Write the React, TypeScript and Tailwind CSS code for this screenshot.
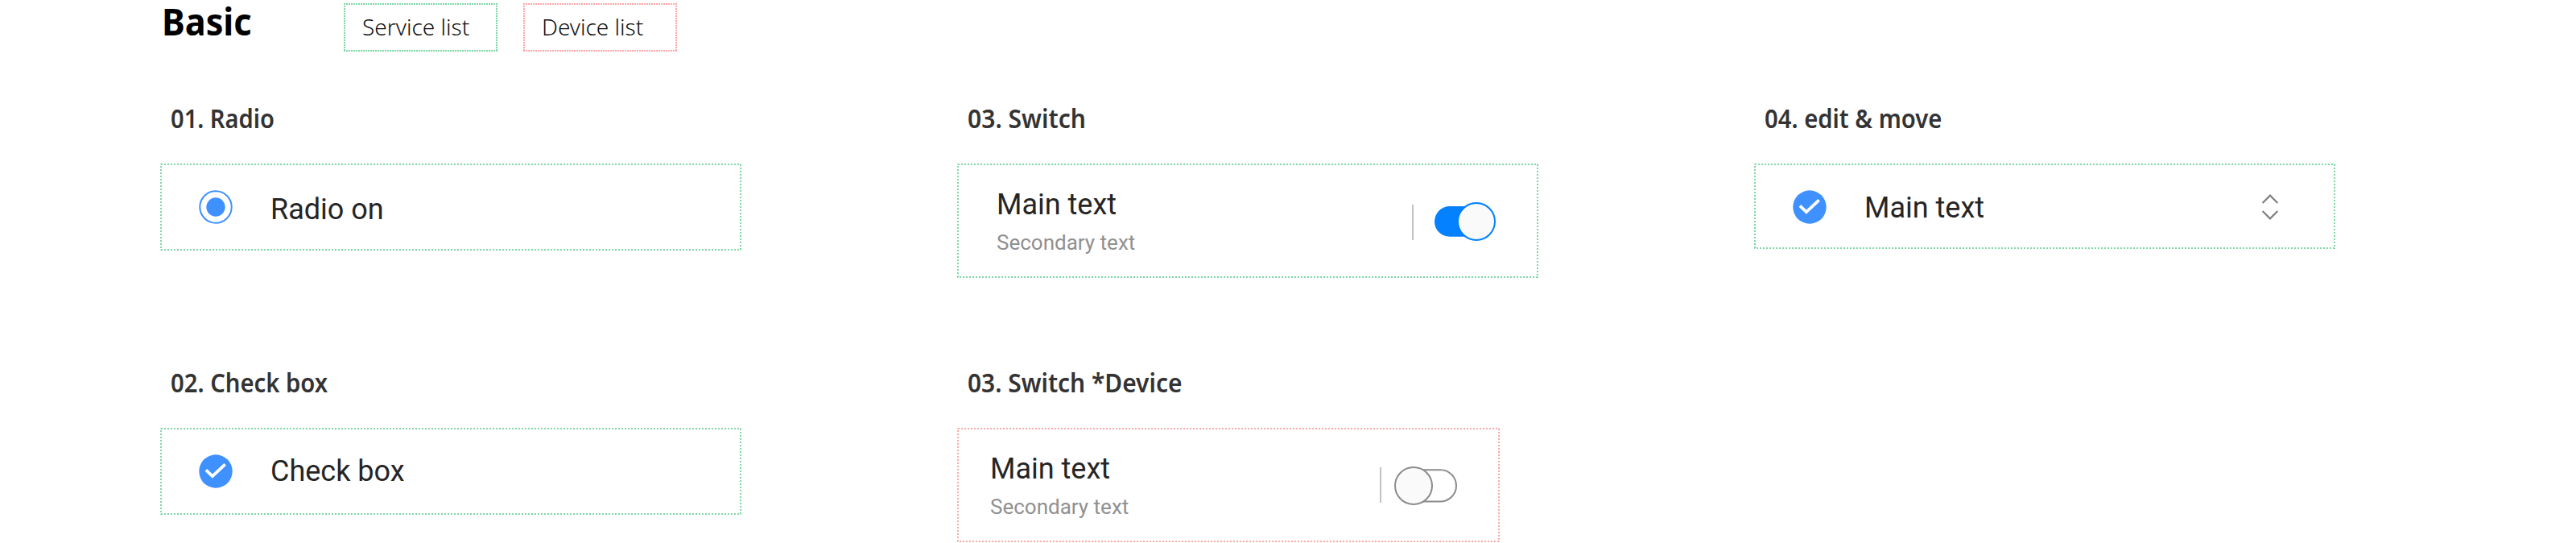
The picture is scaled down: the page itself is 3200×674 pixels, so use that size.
import React, { type ReactNode } from "react";

const green = "[--dot:#7fd6a7]";
const red = "[--dot:#faa9a9]";

// Dotted outline: four strips of 2px squares on a 4px pitch.
const dots =
  "bg-[linear-gradient(90deg,var(--dot)_50%,transparent_50%),linear-gradient(180deg,var(--dot)_50%,transparent_50%),linear-gradient(90deg,var(--dot)_50%,transparent_50%),linear-gradient(180deg,var(--dot)_50%,transparent_50%)] [background-repeat:repeat-x,repeat-y,repeat-x,repeat-y]";
const pitch4 = "[background-size:4px_2px,2px_4px,4px_2px,2px_4px]";
const even = "[background-position:1px_0,100%_1px,3px_100%,0_3px]";
const odd = "[background-position:1px_0,100%_1px,1px_100%,0_3px]";

// Tighter 3px pitch for the small legend boxes.
const fineDots =
  "bg-[linear-gradient(90deg,var(--dot)_60%,transparent_60%),linear-gradient(180deg,var(--dot)_60%,transparent_60%),linear-gradient(90deg,var(--dot)_60%,transparent_60%),linear-gradient(180deg,var(--dot)_60%,transparent_60%)] [background-repeat:repeat-x,repeat-y,repeat-x,repeat-y] [background-size:3px_2px,2px_3px,3px_2px,2px_3px] [background-position:0_0,100%_0,0_100%,0_0]";

function Check() {
  return (
    <svg className="h-[42px] w-[42px] shrink-0" viewBox="0 0 42 42">
      <circle cx="21" cy="21" r="20.7" fill="#3e91ff" />
      <path d="M8.9 19.4 L16.9 27.2 L32.6 12.3" fill="none" stroke="#fff" strokeWidth="3.8" />
    </svg>
  );
}

function Radio() {
  return (
    <svg className="h-[42px] w-[42px] shrink-0" viewBox="0 0 42 42">
      <circle cx="21" cy="21" r="19.7" fill="none" stroke="#3e91ff" strokeWidth="2" />
      <circle cx="21" cy="21" r="11.7" fill="#3e91ff" />
    </svg>
  );
}

function SwitchOn() {
  return (
    <svg className="mt-[2px] h-12 w-[78px] shrink-0" viewBox="0 0 78 48">
      <rect x="1" y="5" width="72" height="37.8" rx="18.9" fill="#0381fe" />
      <circle cx="53" cy="24" r="23" fill="#fafafa" stroke="#0381fe" strokeWidth="2" />
    </svg>
  );
}

function SwitchOff() {
  return (
    <svg className="mt-[2px] h-12 w-[78px] shrink-0" viewBox="0 0 78 48">
      <rect x="6" y="4.2" width="71" height="39.4" rx="19.7" fill="#fff" stroke="#8c8c8c" strokeWidth="2" />
      <circle cx="24" cy="24" r="23" fill="#fafafa" stroke="#8c8c8c" strokeWidth="2" />
    </svg>
  );
}

function Mover() {
  return (
    <svg
      className="h-8 w-[22px] shrink-0"
      viewBox="0 0 22 32"
      fill="none"
      stroke="#808080"
      strokeWidth="2.2"
    >
      <path d="M1.6 11 L11 1.6 L20.4 11 M1.6 21 L11 30.4 L20.4 21" />
    </svg>
  );
}

const main = "text-[36px] leading-[42px] text-[#252525] whitespace-nowrap";

function TwoLine() {
  return (
    <div className="flex flex-col">
      <div className={main}>Main text</div>
      <div className="mt-[11px] text-[26px] leading-[30px] whitespace-nowrap text-[#909090]">
        Secondary text
      </div>
    </div>
  );
}

function Section({ title, squeeze, children }: { title: string; squeeze: string; children: ReactNode }) {
  return (
    <section className="h-[328px]">
      <h2
        className={`mb-[35px] ml-[13px] w-fit origin-left font-['Noto_Sans',sans-serif] text-[32.5px] leading-[42px] font-semibold whitespace-nowrap text-[#333] ${squeeze}`}
      >
        {title}
      </h2>
      {children}
    </section>
  );
}

function Legend({ tone, children }: { tone: string; children: string }) {
  return (
    <div
      className={`h-[60px] w-[191px] pl-[23px] text-[28px] leading-[58px] font-[350] whitespace-nowrap text-[#111] ${fineDots} ${tone}`}
    >
      {children}
    </div>
  );
}

export default function App() {
  return (
    <div className="h-[674px] w-[3200px] overflow-hidden bg-white font-['Roboto',sans-serif]">
      <div className="flex h-[126px] pt-1 pl-[201px] font-['Noto_Sans',sans-serif]">
        <div className="w-[226px]">
          <h1 className="w-fit origin-left scale-x-[0.92] text-[47px] leading-[44px] font-bold text-black">
            Basic
          </h1>
        </div>
        <div className="flex gap-8">
          <Legend tone={green}>Service list</Legend>
          <Legend tone={red}>Device list</Legend>
        </div>
      </div>
      <div className="grid grid-cols-[990px_990px_722px] pl-[199px]">
        <Section title="01. Radio" squeeze="scale-x-[0.895]">
          <div className={`flex h-[108px] w-[722px] items-center pl-[48px] ${dots} ${pitch4} ${odd} ${green}`}>
            <Radio />
            <span className={`mt-[6px] ml-[47px] ${main}`}>Radio on</span>
          </div>
        </Section>
        <Section title="03. Switch" squeeze="scale-x-[0.925]">
          <div
            className={`flex h-[142px] w-[722px] items-center justify-between pr-[52px] pl-[49px] ${dots} ${pitch4} ${even} ${green}`}
          >
            <TwoLine />
            <div className="flex items-center gap-[25px]">
              <div className="mt-[4px] h-11 w-[2px] bg-[#c2c2c2]" />
              <SwitchOn />
            </div>
          </div>
        </Section>
        <Section title="04. edit & move" squeeze="scale-x-[0.9]">
          <div
            className={`flex h-[106px] w-[722px] items-center pt-[2px] pr-[70px] pl-[48px] ${dots} ${pitch4} ${even} ${green}`}
          >
            <Check />
            <span className={`mt-[2px] ml-[47px] flex-1 ${main}`}>Main text</span>
            <Mover />
          </div>
        </Section>
        <Section title="02. Check box" squeeze="scale-x-[0.9]">
          <div className={`flex h-[108px] w-[722px] items-center pl-[48px] ${dots} ${pitch4} ${odd} ${green}`}>
            <Check />
            <span className={`ml-[47px] ${main}`}>Check box</span>
          </div>
        </Section>
        <Section title="03. Switch *Device" squeeze="scale-x-[0.92]">
          <div
            className={`flex h-[142px] w-[674px] items-center justify-between pr-[53px] pl-[41px] ${dots} ${pitch4} ${even} ${red}`}
          >
            <TwoLine />
            <div className="flex items-center gap-[16px]">
              <div className="h-11 w-[2px] bg-[#c2c2c2]" />
              <SwitchOff />
            </div>
          </div>
        </Section>
      </div>
    </div>
  );
}
